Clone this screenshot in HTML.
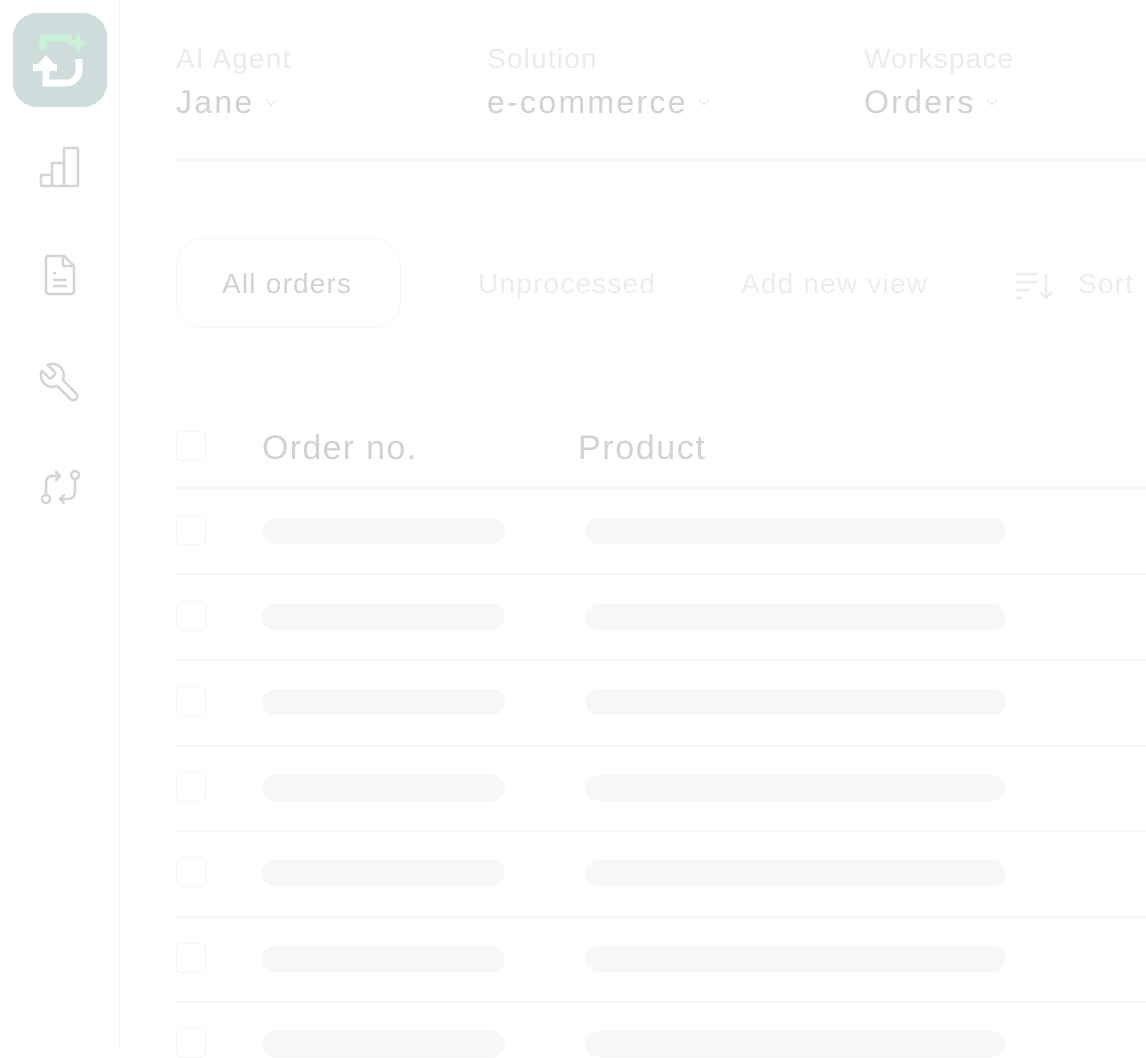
<!DOCTYPE html>
<html><head><meta charset="utf-8"><style>
body{margin:0;width:1146px;height:1048px;overflow:hidden;background:#fff;font-family:"Liberation Sans",sans-serif;position:relative}
.a{position:absolute}
.side{left:0;top:0;width:119px;height:1048px;border-right:1px solid #f5f5f5}
.lbl{font-size:28px;color:#ebebeb;letter-spacing:1.2px}
.val{font-size:32px;color:#d2d2d2;letter-spacing:2.3px}
.chev{display:inline-block;width:7px;height:7px;border-right:1.5px solid #e2e2e2;border-bottom:1.5px solid #e2e2e2;transform:rotate(45deg);margin-left:12px;vertical-align:9px}
.cb{width:30px;height:30px;border:1.5px solid #f5f5f5;border-radius:5px;box-sizing:border-box}
.bar{height:26px;border-radius:13px;background:#f7f7f8}
.line{left:176px;width:970px;height:1.5px;background:#f7f7f7}
.t{font-size:28px;letter-spacing:1.2px}
</style></head><body>
<div class="a side"></div>
<div class="a" style="left:13px;top:13px;width:94px;height:94px;border-radius:24px;background:#cfdcdc"></div>
<svg class="a" style="left:0;top:0" width="120" height="120" viewBox="0 0 120 120">
<path d="M40 38 H72 M43 35 V50" stroke="#c8f2d8" stroke-width="7" fill="none"/>
<path d="M78 32 L81 39 L88 43 L81 47 L78 54 L75 47 L68 43 L75 39 Z" fill="#c8f2d8"/>
<path d="M46 58 V83 H66 A13 13 0 0 0 79 70 V59" stroke="#fff" stroke-width="7" fill="none"/>
<path d="M33 64 H38 L46 55 L54 64 H57 V71 H33 Z" fill="#fff"/>
</svg>
<svg class="a" style="left:38px;top:145px" width="46" height="46" viewBox="0 0 46 46" fill="none" stroke="#d4d4d4" stroke-width="2.5" stroke-linejoin="round">
<rect x="3" y="30" width="11" height="11" rx="1"/><rect x="14" y="18" width="12" height="23"/><rect x="26" y="3" width="14" height="38" rx="1"/>
</svg>
<svg class="a" style="left:42px;top:253px" width="36" height="44" viewBox="0 0 36 44" fill="none" stroke="#d4d4d4" stroke-width="2.5" stroke-linejoin="round">
<path d="M5 3 H22 L32 13 V38 Q32 41 29 41 H7 Q4 41 4 38 V6 Q4 3 7 3Z"/><path d="M21 3 V13 H32"/><path d="M11 20 H14 M11 27 H25 M11 33 H25"/>
</svg>
<svg class="a" style="left:37px;top:360px" width="46" height="46" viewBox="0 0 24 24" fill="none" stroke="#d4d4d4" stroke-width="1.3" stroke-linejoin="round" stroke-linecap="round">
<g transform="translate(24,0) scale(-1,1)"><path d="M14.7 6.3a1 1 0 0 0 0 1.4l1.6 1.6a1 1 0 0 0 1.4 0l3.77-3.77a6 6 0 0 1-7.94 7.94l-6.91 6.91a2.12 2.12 0 0 1-3-3l6.91-6.91a6 6 0 0 1 7.940-7.94l-3.76 3.76z"/></g>
</svg>
<svg class="a" style="left:38px;top:466px" width="46" height="46" viewBox="0 0 46 46" fill="none" stroke="#d4d4d4" stroke-width="2.5" stroke-linecap="round" stroke-linejoin="round">
<circle cx="37" cy="9" r="4"/><circle cx="8" cy="33" r="4"/><path d="M8 29 V17 Q8 10 15 10 H22 M18 6 L22 10 L18 14"/><path d="M37 13 V25 Q37 33 29 33 H22 M26 29 L22 33 L26 37"/>
</svg>
<div class="a lbl" style="left:176px;top:43px">AI Agent</div>
<div class="a val" style="left:176px;top:84px">Jane<span class="chev"></span></div>
<div class="a lbl" style="left:487px;top:43px">Solution</div>
<div class="a val" style="left:487px;top:84px">e-commerce<span class="chev"></span></div>
<div class="a lbl" style="left:864px;top:43px">Workspace</div>
<div class="a val" style="left:864px;top:84px">Orders<span class="chev"></span></div>
<div class="a" style="left:176px;top:159px;width:970px;height:1.5px;background:#f7f7f7"></div>
<div class="a" style="left:176px;top:238px;width:225px;height:90px;border:1.5px solid #f6f6f6;border-radius:28px;box-sizing:border-box"></div>
<div class="a t" style="left:222px;top:268px;color:#d2d2d2">All orders</div>
<div class="a t" style="left:478px;top:268px;color:#ededed">Unprocessed</div>
<div class="a t" style="left:741px;top:268px;color:#ededed">Add new view</div>
<svg class="a" style="left:1015px;top:271px" width="40" height="30" viewBox="0 0 40 30" fill="none" stroke="#ededed" stroke-width="2.5"><path d="M1 3 H22 M1 11 H22 M1 19 H14 M1 27 H7 M31 3 V27 M25 21 L31 27 L37 21"/></svg>
<div class="a t" style="left:1078px;top:268px;color:#ededed">Sort</div>
<div class="a cb" style="left:176px;top:431px"></div>
<div class="a" style="left:262px;top:429px;font-size:34px;color:#d2d2d2;letter-spacing:1.3px">Order no.</div>
<div class="a" style="left:578px;top:429px;font-size:34px;color:#d2d2d2;letter-spacing:1.6px">Product</div>
<div class="a line" style="top:487px"></div>
<div class="a cb" style="left:176px;top:515px"></div><div class="a bar" style="left:262px;top:518px;width:243px"></div><div class="a bar" style="left:585px;top:518px;width:421px"></div>
<div class="a line" style="top:573px"></div>
<div class="a cb" style="left:176px;top:601px"></div><div class="a bar" style="left:262px;top:604px;width:243px"></div><div class="a bar" style="left:585px;top:604px;width:421px"></div>
<div class="a line" style="top:659px"></div>
<div class="a cb" style="left:176px;top:686px"></div><div class="a bar" style="left:262px;top:689px;width:243px"></div><div class="a bar" style="left:585px;top:689px;width:421px"></div>
<div class="a line" style="top:745px"></div>
<div class="a cb" style="left:176px;top:772px"></div><div class="a bar" style="left:262px;top:775px;width:243px"></div><div class="a bar" style="left:585px;top:775px;width:421px"></div>
<div class="a line" style="top:830px"></div>
<div class="a cb" style="left:176px;top:857px"></div><div class="a bar" style="left:262px;top:860px;width:243px"></div><div class="a bar" style="left:585px;top:860px;width:421px"></div>
<div class="a line" style="top:916px"></div>
<div class="a cb" style="left:176px;top:943px"></div><div class="a bar" style="left:262px;top:946px;width:243px"></div><div class="a bar" style="left:585px;top:946px;width:421px"></div>
<div class="a line" style="top:1001px"></div>
<div class="a cb" style="left:176px;top:1028px"></div><div class="a bar" style="left:262px;top:1031px;width:243px"></div><div class="a bar" style="left:585px;top:1031px;width:421px"></div>
</body></html>
